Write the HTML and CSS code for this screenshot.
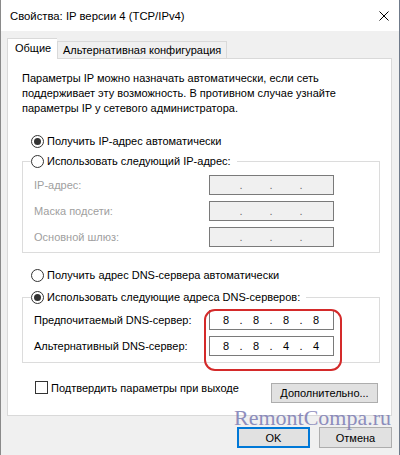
FILE: index.html
```html
<!DOCTYPE html>
<html lang="ru">
  <head>
    <meta charset="UTF-8">
    <meta name="viewport" content="width=device-width, initial-scale=1.0">
    <title>Свойства: IP версии 4 (TCP/IPv4)</title>
    <link rel="stylesheet" href="styles.css">
  </head>
  <body>
    <div id="window">
      <div id="titlebar">
        <span class="title">Свойства: IP версии 4 (TCP/IPv4)</span>
        <svg class="close" width="10" height="10" viewBox="0 0 10 10">
          <path d="M0.5 0.5 L9.5 9.5 M9.5 0.5 L0.5 9.5" stroke="#000" stroke-width="1" fill="none"/>
        </svg>
      </div>
      <div id="tabs">
        <div class="tab active">Общие</div>
        <div class="tab">Альтернативная конфигурация</div>
      </div>
      <div id="panel">
        <p class="intro">
          Параметры IP можно назначать автоматически, если сеть<br>
          поддерживает эту возможность. В противном случае узнайте<br>
          параметры IP у сетевого администратора.
        </p>

        <div class="option first">
          <span class="radio checked"></span>Получить IP-адрес автоматически
        </div>
        <fieldset class="group">
          <legend class="option"><span class="radio"></span>Использовать следующий IP-адрес:</legend>
          <div class="row disabled">
            <span class="label">IP-адрес:</span>
            <span class="ip"><i></i><b>.</b><i></i><b>.</b><i></i><b>.</b><i></i></span>
          </div>
          <div class="row disabled">
            <span class="label">Маска подсети:</span>
            <span class="ip"><i></i><b>.</b><i></i><b>.</b><i></i><b>.</b><i></i></span>
          </div>
          <div class="row disabled">
            <span class="label">Основной шлюз:</span>
            <span class="ip"><i></i><b>.</b><i></i><b>.</b><i></i><b>.</b><i></i></span>
          </div>
        </fieldset>

        <div class="option dns-auto">
          <span class="radio"></span>Получить адрес DNS-сервера автоматически
        </div>
        <fieldset class="group dns">
          <legend class="option"><span class="radio checked"></span>Использовать следующие адреса DNS-серверов:</legend>
          <div class="row">
            <span class="label">Предпочитаемый DNS-сервер:</span>
            <span class="ip"><i>8</i><b>.</b><i>8</i><b>.</b><i>8</i><b>.</b><i>8</i></span>
          </div>
          <div class="row">
            <span class="label">Альтернативный DNS-сервер:</span>
            <span class="ip"><i>8</i><b>.</b><i>8</i><b>.</b><i>4</i><b>.</b><i>4</i></span>
          </div>
          <div class="mark"></div>
        </fieldset>

        <div class="bottom-row">
          <label class="check"><span class="box"></span>Подтвердить параметры при выходе</label>
          <button class="btn advanced">Дополнительно...</button>
        </div>
      </div> <!-- panel -->

      <div id="buttons">
        <button class="btn default">OK</button>
        <button class="btn">Отмена</button>
      </div>

      <div class="watermark">RemontCompa.ru</div>
    </div> <!-- window -->
  </body>
</html>
```

FILE: styles.css
```css
body {
    margin: 0;
    font-family: "Liberation Sans", Arial, sans-serif;
    font-size: 11px;
    color: #000;
}
#window {
    position: relative;
    width: 400px;
    height: 455px;
    box-sizing: border-box;
    background: #f0f0f0;
    border-left: 1px solid #8a8a8a;
    border-right: 1px solid #6f7a8a;
    overflow: hidden;
}
#titlebar {
    height: 31px;
    background: #fff;
    display: flex;
    align-items: center;
    justify-content: space-between;
    padding: 0 10px 0 9px;
}
.title {
    font-size: 11.3px;
}
#tabs {
    display: flex;
    align-items: flex-end;
    height: 20px;
    margin-top: 7px;
    padding-left: 6px;
    position: relative;
    z-index: 1;
}
.tab {
    height: 17px;
    line-height: 16px;
    padding: 0 5px;
    border: 1px solid #d9d9d9;
    border-bottom: none;
    box-sizing: border-box;
}
.tab.active {
    width: 50px;
    height: 21px;
    line-height: 19px;
    background: #fff;
    padding: 0 0 0 7px;
    margin-bottom: -1px;
    border-right: none;
}
#panel {
    margin: 0 7px 0 6px;
    height: 358px;
    box-sizing: border-box;
    background: #fff;
    border: 1px solid #d9d9d9;
    padding: 12px 11px 0 14px;
}
.intro {
    margin: 0 0 17px 0;
    line-height: 15px;
}
.option {
    display: flex;
    align-items: center;
    height: 16px;
}
.option.first {
    margin-left: 9px;
    margin-bottom: 4px;
}
.radio {
    width: 13px;
    height: 13px;
    box-sizing: border-box;
    border: 1px solid #333;
    border-radius: 50%;
    margin-right: 3px;
    display: flex;
    align-items: center;
    justify-content: center;
}
.radio.checked::after {
    content: "";
    width: 7px;
    height: 7px;
    border-radius: 50%;
    background: #333;
}
.group {
    margin: 0;
    border: 1px solid #dcdcdc;
    padding: 0 0 5px 11px;
}
.group legend {
    margin-left: -3px;
    padding: 0 6px 0 0;
}
.group .row:first-of-type {
    margin-top: 6px;
}
.group.dns .row:first-of-type {
    margin-top: 5px;
}
.group.dns {
    position: relative;
    padding-bottom: 6px;
}
.row {
    display: grid;
    grid-template-columns: 175px 125px;
    align-items: center;
    height: 20px;
    margin-top: 6px;
}
.row.disabled .label {
    color: #a0a0a0;
}
.ip {
    display: flex;
    height: 20px;
    box-sizing: border-box;
    border: 1px solid #7a7a7a;
    background: #fff;
    padding-left: 4px;
    align-items: center;
    line-height: 18px;
}
.row.disabled .ip {
    background: #f0f0f0;
    color: #6d6d6d;
}
.ip i {
    font-style: normal;
    width: 24px;
    text-align: center;
}
.ip b {
    font-weight: normal;
    width: 6px;
    text-align: center;
}
.option.dns-auto {
    margin: 14px 0 6px 9px;
}
.mark {
    position: absolute;
    left: 181px;
    top: 4px;
    width: 138px;
    height: 62px;
    box-sizing: border-box;
    border: 2px solid #d42a2a;
    border-radius: 11px;
}
.bottom-row {
    display: flex;
    justify-content: space-between;
    align-items: flex-start;
    margin-top: 18px;
    padding-left: 13px;
    padding-right: 2px;
}
.check {
    display: flex;
    align-items: center;
    height: 13px;
}
.box {
    width: 13px;
    height: 13px;
    box-sizing: border-box;
    border: 1px solid #333;
    margin-right: 3px;
}
.btn {
    font-family: inherit;
    font-size: 11px;
    height: 20px;
    padding: 0;
    background: #e1e1e1;
    border: 1px solid #adadad;
    color: #000;
}
.btn.advanced {
    width: 107px;
    margin-top: 2px;
}
#buttons {
    display: flex;
    justify-content: flex-end;
    gap: 9px;
    padding: 11px 7px 0 0;
}
#buttons .btn {
    width: 73px;
    height: 21px;
}
#buttons .btn.default {
    border: 2px solid #0078d7;
}
.watermark {
    position: absolute;
    left: 233px;
    top: 407px;
    font-family: "Liberation Serif", "Times New Roman", serif;
    font-size: 22px;
    line-height: 22px;
    color: #7c7cb4;
    opacity: 0.85;
}
```
